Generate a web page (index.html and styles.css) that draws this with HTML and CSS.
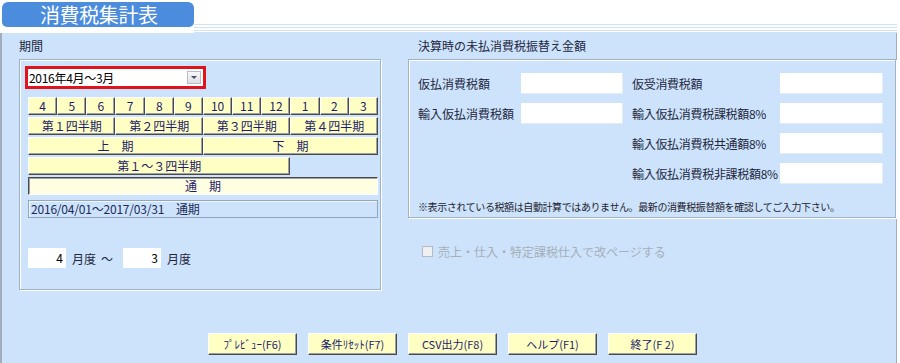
FILE: index.html
```html
<!DOCTYPE html>
<html lang="ja">
<head>
    <meta charset="UTF-8">
    <title>消費税集計表</title>
    <link rel="stylesheet" href="styles.css">
</head>
<body>
    <div class="header">
        <div class="tab">消費税集計表</div>
        <div class="stripes"></div>
    </div>

    <div class="panel">
        <div class="top">
            <div class="col col-left">
                <div class="group-title">期間</div>
                <div class="group group-period">
                    <div class="select-frame">
                        <div class="select">
                            <span>2016年4月～3月</span>
                            <span class="select-btn"></span>
                        </div>
                    </div>

                    <div class="period-grid">
                        <button class="yb">4</button>
                        <button class="yb">5</button>
                        <button class="yb">6</button>
                        <button class="yb">7</button>
                        <button class="yb">8</button>
                        <button class="yb">9</button>
                        <button class="yb">10</button>
                        <button class="yb">11</button>
                        <button class="yb">12</button>
                        <button class="yb">1</button>
                        <button class="yb">2</button>
                        <button class="yb">3</button>

                        <button class="yb span3">第１四半期</button>
                        <button class="yb span3">第２四半期</button>
                        <button class="yb span3">第３四半期</button>
                        <button class="yb span3">第４四半期</button>

                        <button class="yb span6">上　期</button>
                        <button class="yb span6">下　期</button>

                        <button class="yb span9">第１～３四半期</button>

                        <button class="yb span12 pressed">通　期</button>
                    </div>

                    <div class="range">2016/04/01～2017/03/31　通期</div>

                    <div class="month-range">
                        <div class="num">4</div>
                        <span>月度</span>
                        <span class="tilde">～</span>
                        <div class="num">3</div>
                        <span>月度</span>
                    </div>
                </div>
            </div>

            <div class="col col-right">
                <div class="group-title indent">決算時の未払消費税振替え金額</div>
                <div class="group group-tax">
                    <div class="tax-grid">
                        <span>仮払消費税額</span>
                        <div class="field"></div>
                        <span class="label2">仮受消費税額</span>
                        <div class="field"></div>

                        <span>輸入仮払消費税額</span>
                        <div class="field"></div>
                        <span class="label2">輸入仮払消費税課税額8%</span>
                        <div class="field"></div>

                        <span></span>
                        <span></span>
                        <span class="label2">輸入仮払消費税共通額8%</span>
                        <div class="field"></div>

                        <span></span>
                        <span></span>
                        <span class="label2">輸入仮払消費税非課税額8%</span>
                        <div class="field"></div>
                    </div>
                    <p class="note">※表示されている税額は自動計算ではありません。最新の消費税振替額を確認してご入力下さい。</p>
                </div>

                <div class="check">
                    <span class="box"></span>
                    <span>売上・仕入・特定課税仕入で改ページする</span>
                </div>
            </div>
        </div>

        <div class="actions">
            <button class="yb act">ﾌﾟﾚﾋﾞｭｰ(F6)</button>
            <button class="yb act">条件ﾘｾｯﾄ(F7)</button>
            <button class="yb act">CSV出力(F8)</button>
            <button class="yb act">ヘルプ(F1)</button>
            <button class="yb act">終了(F 2)</button>
        </div>
    </div>
</body>
</html>
```

FILE: styles.css
```css
body {
    margin: 0;
    width: 900px;
    height: 363px;
    overflow: hidden;
    background-color: white;
    font-family: "Noto Sans CJK JP", "Noto Sans", sans-serif;
    font-size: 12px;
    color: #1e2640;
}

.header {
    display: flex;
    height: 33px;
}
.tab {
    margin: 2px 0 0 2px;
    width: 154px;
    height: 25px;
    padding-left: 38px;
    background-color: #4b8cdc;
    border-radius: 6px 6px 5px 5px;
    color: white;
    font-size: 20px;
    line-height: 25px;
    letter-spacing: -0.4px;
}
.stripes {
    width: 703px;
    height: 9px;
    margin-top: 24px;
    background: repeating-linear-gradient(to bottom, #cfe2f6 0px, #cfe2f6 1px, white 1px, white 3px);
    border-bottom: 1px solid #cfe2f6;
    box-sizing: border-box;
}

.panel {
    width: 897px;
    height: 330px;
    box-sizing: border-box;
    background-color: #cce3fb;
    border-left: 2px solid #a4adbb;
    border-right: 1px solid #a4adbb;
    padding-left: 17px;
}

.top {
    display: flex;
    gap: 27px;
}
.col-left {
    width: 362px;
}
.col-right {
    width: 488px;
}
.group-title {
    height: 26px;
    line-height: 26px;
}
.group-title.indent {
    padding-left: 10px;
}
.group {
    box-sizing: border-box;
    border: 1px solid #a2b1c3;
    box-shadow: 1px 1px 0 white, inset 1px 1px 0 white;
}

.group-period {
    height: 231px;
    padding: 6px 0 0 5px;
}
.select-frame {
    width: 181px;
    height: 23px;
    box-sizing: border-box;
    border: 3px solid #e0141c;
}
.select {
    display: flex;
    justify-content: space-between;
    align-items: center;
    height: 17px;
    background-color: white;
    padding: 0 2px 0 1px;
    font-size: 12px;
    letter-spacing: -0.3px;
    color: black;
}
.select-btn {
    width: 14px;
    height: 13px;
    box-sizing: border-box;
    border: 1px solid #b8bcc4;
    background: linear-gradient(#f6f7f9, #dde0e5);
    position: relative;
}
.select-btn::after {
    content: "";
    position: absolute;
    left: 3px;
    top: 4px;
    border-left: 3px solid transparent;
    border-right: 3px solid transparent;
    border-top: 3px solid #4a4e58;
}

.period-grid {
    display: grid;
    grid-template-columns: repeat(12, 1fr);
    grid-auto-rows: 18px;
    row-gap: 2px;
    width: 350px;
    margin: 8px 0 0 3px;
}
.yb {
    margin: 0;
    padding: 0;
    box-sizing: border-box;
    background-color: #ffffc4;
    border: 1px solid;
    border-color: white #4a4a4a #4a4a4a white;
    box-shadow: inset -1px -1px 0 #a0a0a0;
    font-family: "Noto Sans CJK JP", "Noto Sans", sans-serif;
    font-size: 12px;
    line-height: 14px;
    color: #1c1c6a;
    cursor: pointer;
}
.span3 { grid-column: span 3; }
.span6 { grid-column: span 6; }
.span9 { grid-column: span 9; }
.span12 { grid-column: span 12; }
.yb.pressed {
    background-color: #fffde2;
    border-color: #4a4a4a white white #4a4a4a;
    box-shadow: inset 1px 1px 0 #a0a0a0;
}

.range {
    width: 350px;
    height: 18px;
    margin: 5px 0 0 3px;
    box-sizing: border-box;
    border: 1px solid #93a6bb;
    box-shadow: inset 1px 1px 0 #eef5fd;
    padding-left: 2px;
    line-height: 16px;
    color: #1c2a5a;
    letter-spacing: -0.2px;
}

.month-range {
    display: flex;
    align-items: center;
    height: 20px;
    margin: 30px 0 0 3px;
}
.num {
    width: 38px;
    height: 20px;
    box-sizing: border-box;
    background-color: white;
    text-align: right;
    padding-right: 3px;
    line-height: 20px;
    color: black;
}
.month-range span {
    margin-left: 6px;
}
.month-range .tilde {
    margin: 0 10px 0 5px;
}

.group-tax {
    height: 159px;
    padding: 13px 0 0 9px;
}
.tax-grid {
    display: grid;
    grid-template-columns: 103px 102px 157px 103px;
    grid-auto-rows: 21px;
    row-gap: 9px;
    align-items: center;
}
.label2 {
    padding-left: 9px;
    white-space: nowrap;
    letter-spacing: -0.3px;
}
.field {
    height: 21px;
    background-color: white;
    box-shadow: inset -1px -1px 0 #e4ecf5;
}
.note {
    margin: 17px 0 0 0;
    font-size: 10px;
    line-height: 12px;
    letter-spacing: -0.4px;
    white-space: nowrap;
    color: #1e2230;
}

.check {
    display: flex;
    align-items: center;
    margin: 27px 0 0 14px;
    height: 13px;
    color: #a6aeb8;
}
.check .box {
    width: 11px;
    height: 11px;
    box-sizing: border-box;
    border: 1px solid #b2bac4;
    background-color: #eef0f2;
    margin-right: 5px;
}

.actions {
    display: flex;
    gap: 11px;
    margin: 43px 0 0 189px;
}
.yb.act {
    width: 89px;
    height: 22px;
    font-size: 11px;
}
```
